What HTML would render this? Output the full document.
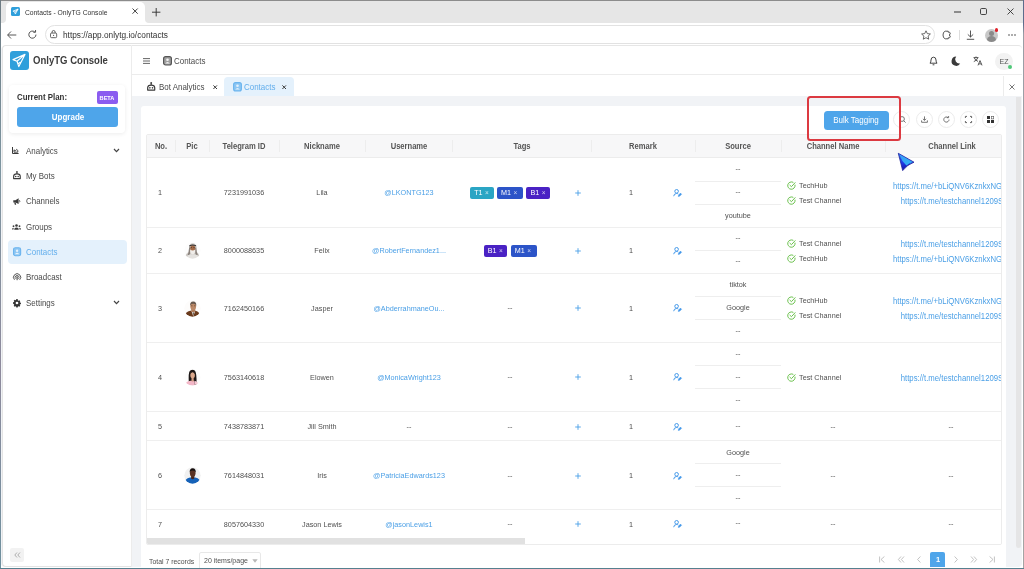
<!DOCTYPE html>
<html><head><meta charset="utf-8"><title>Contacts - OnlyTG Console</title>
<style>
*{box-sizing:border-box;margin:0;padding:0}
html,body{width:1024px;height:569px;overflow:hidden;background:#fff;font-family:"Liberation Sans",sans-serif;color:#555}
.a{position:absolute}
.t{position:absolute;white-space:nowrap;line-height:1;font-size:7.8px;color:#505050;transform:scaleX(.93);transform-origin:0 50%}
.c{transform:translateX(-50%) scaleX(.93);transform-origin:50% 50%}
.b{font-weight:bold}
.lk{color:#4a9fe6}
.ic{top:111.2px;width:17px;height:17px;border-radius:50%;border:1px solid #ececec;background:#fff}
.th{font-size:8.17px;color:#555}
.tg{height:11.6px;border-radius:2px;color:#fff;font-size:7.2px;line-height:11.6px;white-space:nowrap;padding-left:4px}
.tg span{display:inline-block}
.tg i{font-style:normal;font-size:6.5px;margin-left:2.5px;opacity:.75}
.m{font-size:8.55px;color:#4a4a4a}
svg{position:absolute;overflow:visible}
</style></head><body><div id="root" style="position:absolute;left:0;top:0;width:1024px;height:569px;will-change:transform">
<!-- browser chrome -->
<div class="a" style="left:0;top:0;width:1024px;height:22.6px;background:#e6e6e6"></div>
<div class="a" style="left:0;top:0;width:1024px;height:1px;background:#8c8c8c"></div>
<div class="a" style="left:6.4px;top:2.2px;width:138.8px;height:21px;background:#fff;border-radius:5px 5px 0 0"></div>
<div class="a" style="left:1px;top:19px;width:5.4px;height:4px;background:#fff"></div><div class="a" style="left:1px;top:14px;width:5.4px;height:8.6px;background:#e6e6e6;border-radius:0 0 4px 0"></div>
<div class="a" style="left:145.2px;top:19px;width:5.4px;height:4px;background:#fff"></div><div class="a" style="left:145.2px;top:14px;width:5.4px;height:8.6px;background:#e6e6e6;border-radius:0 0 0 4px"></div>
<div class="a" style="left:0;top:22.6px;width:1024px;height:23.4px;background:#fff"></div>
<div class="a" style="left:45px;top:25px;width:890px;height:18.5px;border:1px solid #e2e2e2;border-radius:9.5px;background:#fff"></div>
<div class="t" id="tabtitle" style="left:24.8px;top:9.2px;font-size:7.26px;color:#333">Contacts - OnlyTG Console</div>
<div class="t" id="url" style="left:63px;top:30.5px;font-size:8.92px;color:#333">https://app.onlytg.io/contacts</div>

<!-- page -->
<div class="a" id="page" style="left:1px;top:46px;width:1020.6px;height:521px;background:#f1f3f6;border-radius:4px"></div>
<!-- sidebar -->
<div class="a" style="left:2.4px;top:45.4px;width:129.6px;height:521.600px;background:#fff;border:1px solid #e4e4e4;border-right-color:#ececec;border-radius:4px 0 0 4px"></div>
<!-- header -->
<div class="a" style="left:132px;top:45.4px;width:889.600px;height:29.600px;background:#fff;border-top:1px solid #e6e6e6;border-bottom:1px solid #ececec;border-radius:0 4px 0 0"></div>
<!-- tabs row -->
<div class="a" style="left:132px;top:75px;width:890px;height:21px;background:#fff"></div>
<!-- card -->
<div class="a" style="left:141px;top:106px;width:865px;height:461px;background:#fff;border-radius:3px 3px 0 0"></div>


<!-- SIDEBAR CONTENT -->
<div class="a" style="left:10px;top:51px;width:19px;height:19px;background:#2f9fdb;border-radius:3px"></div>
<svg style="left:10px;top:51px" width="19" height="19" viewBox="0 0 19 19"><path d="M15 3.400L3 8.600L7 10.300ZM15 3.400L7 10.300L8.800 15.600ZM8 12.800L10 11.400" fill="none" stroke="#fff" stroke-width="1.150" stroke-linejoin="round" stroke-linecap="round"/></svg>
<div class="t b" id="brand" style="left:33px;top:56.3px;font-size:10.4px;color:#3d3d3d;transform:scaleX(.92);transform-origin:0 0">OnlyTG Console</div>
<div class="a" style="left:9px;top:85px;width:116px;height:48px;background:#fff;border-radius:4px;box-shadow:0 1px 4px rgba(0,0,0,.08)"></div>
<div class="t b" id="plan" style="left:17px;top:92.800px;font-size:8.500px;color:#333;transform:scaleX(.93);transform-origin:0 0">Current Plan:</div>
<div class="a" style="left:96.5px;top:91px;width:21.5px;height:12.5px;background:#8b5cf0;border-radius:2px"></div>
<div class="t b c" style="left:107.2px;top:94.5px;font-size:6.02px;color:#fff">BETA</div>
<div class="a" style="left:17px;top:107px;width:101px;height:19.5px;background:#4ea5ea;border-radius:3px"></div>
<div class="t b c" id="upg" style="left:67.5px;top:113px;font-size:8.6px;color:#fff">Upgrade</div>

<div class="a" style="left:8px;top:240px;width:119px;height:23.5px;background:#e4f1fc;border-radius:4px"></div>
<div class="t m" style="left:26px;top:146.8px">Analytics</div>
<div class="t m" style="left:26px;top:172.1px">My Bots</div>
<div class="t m" style="left:26px;top:197.4px">Channels</div>
<div class="t m" style="left:26px;top:222.8px">Groups</div>
<div class="t m" style="left:26px;top:248.1px;color:#62aeec">Contacts</div>
<div class="t m" style="left:26px;top:273.4px">Broadcast</div>
<div class="t m" style="left:26px;top:298.8px">Settings</div>
<svg style="left:113px;top:147.5px" width="7" height="5" viewBox="0 0 7 5"><path d="M1 1 L3.5 3.6 L6 1" fill="none" stroke="#444" stroke-width="1.2"/></svg>
<svg style="left:113px;top:299.5px" width="7" height="5" viewBox="0 0 7 5"><path d="M1 1 L3.5 3.6 L6 1" fill="none" stroke="#444" stroke-width="1.2"/></svg>
<div class="a" style="left:10px;top:548px;width:14px;height:13.5px;background:#f2f2f2;border-radius:2px"></div>
<svg style="left:13.5px;top:551.5px" width="7" height="6" viewBox="0 0 7 6"><path d="M3 .5 L.8 3 L3 5.5 M6 .5 L3.8 3 L6 5.5" fill="none" stroke="#9a9a9a" stroke-width=".8"/></svg>


<!-- HEADER CONTENT -->
<svg style="left:142.5px;top:57.5px" width="7" height="6" viewBox="0 0 7 6"><path d="M0 .6H7M0 3H7M0 5.4H7" stroke="#555" stroke-width=".9"/></svg>
<svg style="left:162.5px;top:56px" width="9" height="10" viewBox="0 0 9 10"><rect x=".6" y=".6" width="7.8" height="8.4" rx="2" fill="#a0a0a0" stroke="#555" stroke-width="1.2"/><circle cx="4.5" cy="3.8" r="1.3" fill="#f4f4f4"/><path d="M2.2 7.600Q4.500 4.600 6.800 7.600Z" fill="#f4f4f4"/></svg>
<div class="t m" id="hc" style="left:174px;top:57px">Contacts</div>
<!-- tabs -->
<div class="a" style="left:223.5px;top:77px;width:70.5px;height:19px;background:#e4f1fc;border-radius:4px 4px 0 0"></div>
<svg style="left:147.400px;top:81.900px" width="8.4" height="8.8" viewBox="0 0 7.6 8"><circle cx="3.800" cy=".9" r=".85" fill="#3a3a3a"/><path d="M3.800 1.400V2.800" stroke="#3a3a3a" stroke-width="1"/><path d="M.6 7.300V5.300Q.6 2.800 3.800 2.800Q7 2.800 7 5.300V7.300Z" fill="none" stroke="#3a3a3a" stroke-width="1.100" stroke-linejoin="round"/><circle cx="2.600" cy="5.300" r=".75" fill="#3a3a3a"/><circle cx="5" cy="5.300" r=".75" fill="#3a3a3a"/></svg>
<div class="t m" id="tb1" style="left:159px;top:82.6px">Bot Analytics</div>
<svg style="left:212.600px;top:84.500px" width="4.4" height="4.4" viewBox="0 0 4.4 4.4"><path d="M.4 .4L4 4M4 .4L.4 4" stroke="#3a3a3a" stroke-width="1"/></svg>
<svg style="left:232.5px;top:82px" width="9" height="10" viewBox="0 0 9 10"><rect x=".6" y=".6" width="7.8" height="8.4" rx="2" fill="#8cc6f3" stroke="#6ab4ee" stroke-width="1.1"/><circle cx="4.5" cy="3.8" r="1.3" fill="#e4f1fc"/><path d="M2.2 7.6 Q4.5 4.6 6.8 7.6Z" fill="#e4f1fc"/></svg>
<div class="t m" id="tb2" style="left:244px;top:82.6px;color:#62aeec">Contacts</div>
<svg style="left:282.400px;top:84.500px" width="4.4" height="4.4" viewBox="0 0 4.4 4.4"><path d="M.4 .4L4 4M4 .4L.4 4" stroke="#3a3a3a" stroke-width="1"/></svg>
<div class="a" style="left:1002.5px;top:76px;width:1px;height:20px;background:#ececec"></div>
<svg style="left:1008.5px;top:83.5px" width="6" height="6" viewBox="0 0 6 6"><path d="M.5 .5L5.5 5.5M5.5 .5L.5 5.5" stroke="#555" stroke-width=".8"/></svg>
<!-- header right icons -->
<svg style="left:929px;top:55.5px" width="9" height="10" viewBox="0 0 9 10"><path d="M1 7.2 Q2 6.2 2 4 Q2 1.2 4.5 1.2 Q7 1.2 7 4 Q7 6.2 8 7.2 Z" fill="none" stroke="#444" stroke-width="1" stroke-linejoin="round"/><path d="M3.6 8.8H5.4" stroke="#444" stroke-width="1"/></svg>
<svg style="left:951px;top:55.5px" width="10" height="10" viewBox="0 0 10 10"><path d="M5.2 .6 A4.6 4.6 0 1 0 9.2 7.4 A4.2 4.2 0 0 1 5.2 .6Z" fill="#3a3a3a"/></svg>
<svg style="left:972.5px;top:56px" width="10" height="10" viewBox="0 0 10 10"><path d="M.6 1.6H5.4M3 .5V1.6M1.2 1.8Q2.4 4.6 5 5.4M4.8 1.8Q3.8 4.6 .8 5.6" fill="none" stroke="#444" stroke-width=".9"/><path d="M5 9.4L7 4.6L9 9.4M5.7 7.9H8.3" fill="none" stroke="#444" stroke-width=".9"/></svg>
<div class="a" style="left:995px;top:52.5px;width:17.5px;height:17.5px;border-radius:50%;background:#f2f2f2"></div>
<div class="t c" style="left:1003.5px;top:57.7px;font-size:7.52px;color:#555">EZ</div>
<div class="a" style="left:1007.5px;top:64.5px;width:4.6px;height:4.6px;border-radius:50%;background:#4fc878"></div>


<!-- CHROME ICONS -->
<div class="a" style="left:11px;top:6.9px;width:9.2px;height:9.2px;background:#2f9fdb;border-radius:1.5px"></div>
<svg style="left:11px;top:6.9px" width="9.2" height="9.2" viewBox="0 0 19 19"><path d="M14.6 4.2 L4 8.6 L7.6 10 L9 14.6 Z M7.6 10 L14.6 4.2 L9 11.3" fill="none" stroke="#fff" stroke-width="1.6" stroke-linejoin="round"/></svg>
<svg style="left:132.4px;top:8.4px" width="6.2" height="6.2" viewBox="0 0 6 6"><path d="M.5 .5L5.5 5.5M5.5 .5L.5 5.5" stroke="#333" stroke-width=".9"/></svg>
<svg style="left:152.2px;top:7.5px" width="8.4" height="8.4" viewBox="0 0 8 8"><path d="M4 0V8M0 4H8" stroke="#333" stroke-width=".9"/></svg>
<svg style="left:7.300px;top:30.500px" width="9.5" height="8" viewBox="0 0 9.5 8"><path d="M9.300 4H.8M4 .5L.6 4L4 7.500" fill="none" stroke="#444" stroke-width=".9"/></svg>
<svg style="left:28.300px;top:30px" width="9.2" height="9.2" viewBox="0 0 9 9"><path d="M7.8 4.5A3.5 3.5 0 1 1 6.6 1.9" fill="none" stroke="#444" stroke-width=".9"/><path d="M5.2 2.2H7.4V0" fill="none" stroke="#444" stroke-width=".9"/></svg>
<svg style="left:49.700px;top:29.800px" width="7.2" height="8.2" viewBox="0 0 7 8"><rect x=".5" y="3" width="6" height="4.5" rx="1" fill="none" stroke="#444" stroke-width=".8"/><path d="M2 3V2A1.5 1.5 0 0 1 5 2V3" fill="none" stroke="#444" stroke-width=".8"/><circle cx="3.5" cy="5.2" r=".6" fill="#444"/></svg>
<svg style="left:953.5px;top:10.5px" width="7" height="2" viewBox="0 0 7 2"><path d="M0 1H7" stroke="#333" stroke-width="1"/></svg>
<svg style="left:980px;top:8px" width="7" height="7" viewBox="0 0 7 7"><rect x=".5" y=".5" width="6" height="6" rx="1.2" fill="none" stroke="#333" stroke-width=".9"/></svg>
<svg style="left:1006.8px;top:8.2px" width="7" height="7" viewBox="0 0 7 7"><path d="M.5 .5L6.5 6.5M6.5 .5L.5 6.5" stroke="#333" stroke-width=".9"/></svg>
<svg style="left:920.5px;top:29.5px" width="10" height="10" viewBox="0 0 10 10"><path d="M5 .8L6.3 3.6L9.4 4L7.1 6.1L7.7 9.2L5 7.7L2.3 9.2L2.9 6.1L.6 4L3.7 3.6Z" fill="none" stroke="#444" stroke-width=".8" stroke-linejoin="round"/></svg>
<svg style="left:942px;top:30px" width="10" height="10" viewBox="0 0 10 10"><path d="M3.2 1.2H6.2V2.2Q7.6 1.6 8.2 3 Q8.6 4.6 7 5 Q8.6 5.6 8.2 7 Q7.6 8.4 6.2 7.8V8.8H3.2Q1 8.2 1 5Q1 1.8 3.2 1.2Z" fill="none" stroke="#444" stroke-width=".9" stroke-linejoin="round"/></svg>
<div class="a" style="left:958.5px;top:29.5px;width:1px;height:10px;background:#ddd"></div>
<svg style="left:965.5px;top:29.5px" width="9" height="10" viewBox="0 0 9 10"><path d="M4.5 .5V7M1.8 4.4L4.5 7L7.2 4.4M.8 9.3H8.2" fill="none" stroke="#444" stroke-width=".9"/></svg>
<div class="a" style="left:984.5px;top:28.5px;width:13px;height:13px;border-radius:50%;background:#c8c8c8;overflow:hidden"><div class="a" style="left:4px;top:2.2px;width:5px;height:5px;border-radius:50%;background:#8a8a8a"></div><div class="a" style="left:2px;top:7.6px;width:9px;height:8px;border-radius:50%;background:#8a8a8a"></div></div>
<div class="a" style="left:994.5px;top:28px;width:3.6px;height:3.6px;border-radius:50%;background:#e0202a"></div>
<svg style="left:1007.5px;top:34px" width="8" height="2" viewBox="0 0 8 2"><circle cx="1" cy="1" r=".8" fill="#444"/><circle cx="4" cy="1" r=".8" fill="#444"/><circle cx="7" cy="1" r=".8" fill="#444"/></svg>

<!-- TABLE -->
<div class="a" id="tbl" style="left:145.7px;top:134px;width:856.0999999999999px;height:411px;overflow:hidden;border:1px solid #ececec;border-radius:2px">
<div class="a" style="left:0;top:0;width:900px;height:23px;background:#f7f7f8;border-bottom:1px solid #ececec"></div>
<div class="t b c th" style="left:14.3px;top:7.9px">No.</div>
<div class="t b c th" style="left:45.8px;top:7.9px">Pic</div>
<div class="a" style="left:28.8px;top:5px;width:1px;height:12px;background:#ededed"></div>
<div class="t b c th" style="left:97.8px;top:7.9px">Telegram ID</div>
<div class="a" style="left:62.8px;top:5px;width:1px;height:12px;background:#ededed"></div>
<div class="t b c th" style="left:175.8px;top:7.9px">Nickname</div>
<div class="a" style="left:132.8px;top:5px;width:1px;height:12px;background:#ededed"></div>
<div class="t b c th" style="left:262.3px;top:7.9px">Username</div>
<div class="a" style="left:218.8px;top:5px;width:1px;height:12px;background:#ededed"></div>
<div class="t b c th" style="left:375.05px;top:7.9px">Tags</div>
<div class="a" style="left:305.8px;top:5px;width:1px;height:12px;background:#ededed"></div>
<div class="t b c th" style="left:496.3px;top:7.9px">Remark</div>
<div class="a" style="left:444.3px;top:5px;width:1px;height:12px;background:#ededed"></div>
<div class="t b c th" style="left:591.3px;top:7.9px">Source</div>
<div class="a" style="left:548.3px;top:5px;width:1px;height:12px;background:#ededed"></div>
<div class="t b c th" style="left:686.55px;top:7.9px">Channel Name</div>
<div class="a" style="left:634.3px;top:5px;width:1px;height:12px;background:#ededed"></div>
<div class="t b c th" style="left:805.05px;top:7.9px">Channel Link</div>
<div class="a" style="left:738.8px;top:5px;width:1px;height:12px;background:#ededed"></div>
<div class="a" style="left:0;top:91.5px;width:900px;height:1px;background:#efefef"></div>
<div class="a" style="left:0;top:137.5px;width:900px;height:1px;background:#efefef"></div>
<div class="a" style="left:0;top:207.0px;width:900px;height:1px;background:#efefef"></div>
<div class="a" style="left:0;top:276.0px;width:900px;height:1px;background:#efefef"></div>
<div class="a" style="left:0;top:305.0px;width:900px;height:1px;background:#efefef"></div>
<div class="a" style="left:0;top:374.0px;width:900px;height:1px;background:#efefef"></div>
<div class="a" style="left:0;top:402.5px;width:900px;height:1px;background:#efefef"></div>
<div class="t c " style="left:13.8px;top:54.4px">1</div>
<div class="t c " style="left:97.3px;top:54.4px">7231991036</div>
<div class="t c " style="left:175.6px;top:54.4px">Lila</div>
<div class="t c lk" style="left:262.1px;top:54.4px">@LKONTG123</div>
<div class="a tg" style="left:323.5px;top:52.3px;width:23.5px;background:#2aa5c4"><span>T1</span><i>×</i></div>
<div class="a tg" style="left:350.4px;top:52.3px;width:26px;background:#2c54c8"><span>M1</span><i>×</i></div>
<div class="a tg" style="left:379.8px;top:52.3px;width:23.7px;background:#4a22c4"><span>B1</span><i>×</i></div>
<svg style="left:428.4px;top:54.8px" width="6" height="6" viewBox="0 0 6 6"><path d="M3 .2V5.8M.2 3H5.8" stroke="#4a9fe6" stroke-width=".9"/></svg>
<div class="t c " style="left:484.6px;top:54.4px">1</div>
<svg style="left:526.1px;top:53.9px" width="9" height="8" viewBox="0 0 9 8"><circle cx="3.6" cy="2.300" r="1.800" fill="none" stroke="#4499ea" stroke-width="1"/><path d="M.7 7.200Q.9 4.600 3.600 4.500Q4.600 4.500 5.200 4.900" fill="none" stroke="#4499ea" stroke-width="1"/><path d="M5.300 7.500L5.500 6.100L7.500 4.100L8.600 5.200L6.600 7.200Z" fill="#4499ea" stroke="#4499ea" stroke-width=".5" stroke-linejoin="round"/></svg>
<div class="t c " style="left:591.3px;top:30.2px">--</div>
<div class="t c " style="left:591.3px;top:53.2px">--</div>
<div class="a" style="left:548.3px;top:45.6px;width:86px;height:1px;background:#eeeeee"></div>
<div class="t c " style="left:591.3px;top:77.1px">youtube</div>
<div class="a" style="left:548.3px;top:68.6px;width:86px;height:1px;background:#eeeeee"></div>
<svg style="left:640.5px;top:45.9px" width="9" height="9" viewBox="0 0 9 9"><path d="M8.100 4.100A3.700 3.700 0 1 1 6 1.200" fill="none" stroke="#6cc24e" stroke-width="1" stroke-linecap="round"/><path d="M2.900 4.200L4.400 5.700L8.100 1.700" fill="none" stroke="#6cc24e" stroke-width="1" stroke-linecap="round" stroke-linejoin="round"/></svg>
<div class="t" style="left:652.3px;top:46.9px">TechHub</div>
<div class="t c lk" style="left:805.1px;top:46.7px;font-size:8.33px">https://t.me/+bLiQNV6KznkxNGYx</div>
<svg style="left:640.5px;top:60.9px" width="9" height="9" viewBox="0 0 9 9"><path d="M8.100 4.100A3.700 3.700 0 1 1 6 1.200" fill="none" stroke="#6cc24e" stroke-width="1" stroke-linecap="round"/><path d="M2.900 4.200L4.400 5.700L8.100 1.700" fill="none" stroke="#6cc24e" stroke-width="1" stroke-linecap="round" stroke-linejoin="round"/></svg>
<div class="t" style="left:652.3px;top:61.9px">Test Channel</div>
<div class="t c lk" style="left:805.1px;top:61.7px;font-size:8.33px">https://t.me/testchannel1209S</div>
<div class="t c " style="left:13.8px;top:112.2px">2</div>
<div class="t c " style="left:97.3px;top:112.2px">8000088635</div>
<div class="t c " style="left:175.6px;top:112.2px">Felix</div>
<div class="t c lk" style="left:262.1px;top:112.2px">@RobertFernandez1...</div>
<div class="a tg" style="left:336.95px;top:110.1px;width:23.7px;background:#4a22c4"><span>B1</span><i>×</i></div>
<div class="a tg" style="left:364.05px;top:110.1px;width:26px;background:#2c54c8"><span>M1</span><i>×</i></div>
<svg style="left:428.4px;top:112.6px" width="6" height="6" viewBox="0 0 6 6"><path d="M3 .2V5.8M.2 3H5.8" stroke="#4a9fe6" stroke-width=".9"/></svg>
<div class="t c " style="left:484.6px;top:112.2px">1</div>
<svg style="left:526.1px;top:111.7px" width="9" height="8" viewBox="0 0 9 8"><circle cx="3.6" cy="2.300" r="1.800" fill="none" stroke="#4499ea" stroke-width="1"/><path d="M.7 7.200Q.9 4.600 3.600 4.500Q4.600 4.500 5.200 4.900" fill="none" stroke="#4499ea" stroke-width="1"/><path d="M5.300 7.500L5.500 6.100L7.500 4.100L8.600 5.200L6.600 7.200Z" fill="#4499ea" stroke="#4499ea" stroke-width=".5" stroke-linejoin="round"/></svg>
<div class="t c " style="left:591.3px;top:99.2px">--</div>
<div class="t c " style="left:591.3px;top:122.2px">--</div>
<div class="a" style="left:548.3px;top:114.6px;width:86px;height:1px;background:#eeeeee"></div>
<svg style="left:640.5px;top:103.7px" width="9" height="9" viewBox="0 0 9 9"><path d="M8.100 4.100A3.700 3.700 0 1 1 6 1.200" fill="none" stroke="#6cc24e" stroke-width="1" stroke-linecap="round"/><path d="M2.900 4.200L4.400 5.700L8.100 1.700" fill="none" stroke="#6cc24e" stroke-width="1" stroke-linecap="round" stroke-linejoin="round"/></svg>
<div class="t" style="left:652.3px;top:104.7px">Test Channel</div>
<div class="t c lk" style="left:805.1px;top:104.5px;font-size:8.33px">https://t.me/testchannel1209S</div>
<svg style="left:640.5px;top:118.7px" width="9" height="9" viewBox="0 0 9 9"><path d="M8.100 4.100A3.700 3.700 0 1 1 6 1.200" fill="none" stroke="#6cc24e" stroke-width="1" stroke-linecap="round"/><path d="M2.900 4.200L4.400 5.700L8.100 1.700" fill="none" stroke="#6cc24e" stroke-width="1" stroke-linecap="round" stroke-linejoin="round"/></svg>
<div class="t" style="left:652.3px;top:119.7px">TechHub</div>
<div class="t c lk" style="left:805.1px;top:119.5px;font-size:8.33px">https://t.me/+bLiQNV6KznkxNGYx</div>
<div class="t c " style="left:13.8px;top:169.7px">3</div>
<div class="t c " style="left:97.3px;top:169.7px">7162450166</div>
<div class="t c " style="left:175.6px;top:169.7px">Jasper</div>
<div class="t c lk" style="left:262.1px;top:169.7px">@AbderrahmaneOu...</div>
<div class="t c " style="left:363.5px;top:169.1px">--</div>
<svg style="left:428.4px;top:170.1px" width="6" height="6" viewBox="0 0 6 6"><path d="M3 .2V5.8M.2 3H5.8" stroke="#4a9fe6" stroke-width=".9"/></svg>
<div class="t c " style="left:484.6px;top:169.7px">1</div>
<svg style="left:526.1px;top:169.2px" width="9" height="8" viewBox="0 0 9 8"><circle cx="3.6" cy="2.300" r="1.800" fill="none" stroke="#4499ea" stroke-width="1"/><path d="M.7 7.200Q.9 4.600 3.600 4.500Q4.600 4.500 5.200 4.900" fill="none" stroke="#4499ea" stroke-width="1"/><path d="M5.300 7.500L5.500 6.100L7.500 4.100L8.600 5.200L6.600 7.200Z" fill="#4499ea" stroke="#4499ea" stroke-width=".5" stroke-linejoin="round"/></svg>
<div class="t c " style="left:591.3px;top:146.18px">tiktok</div>
<div class="t c " style="left:591.3px;top:169.35px">Google</div>
<div class="a" style="left:548.3px;top:160.77px;width:86px;height:1px;background:#eeeeee"></div>
<div class="t c " style="left:591.3px;top:191.62px">--</div>
<div class="a" style="left:548.3px;top:183.93px;width:86px;height:1px;background:#eeeeee"></div>
<svg style="left:640.5px;top:161.2px" width="9" height="9" viewBox="0 0 9 9"><path d="M8.100 4.100A3.700 3.700 0 1 1 6 1.200" fill="none" stroke="#6cc24e" stroke-width="1" stroke-linecap="round"/><path d="M2.900 4.200L4.400 5.700L8.100 1.700" fill="none" stroke="#6cc24e" stroke-width="1" stroke-linecap="round" stroke-linejoin="round"/></svg>
<div class="t" style="left:652.3px;top:162.2px">TechHub</div>
<div class="t c lk" style="left:805.1px;top:162.0px;font-size:8.33px">https://t.me/+bLiQNV6KznkxNGYx</div>
<svg style="left:640.5px;top:176.2px" width="9" height="9" viewBox="0 0 9 9"><path d="M8.100 4.100A3.700 3.700 0 1 1 6 1.200" fill="none" stroke="#6cc24e" stroke-width="1" stroke-linecap="round"/><path d="M2.900 4.200L4.400 5.700L8.100 1.700" fill="none" stroke="#6cc24e" stroke-width="1" stroke-linecap="round" stroke-linejoin="round"/></svg>
<div class="t" style="left:652.3px;top:177.2px">Test Channel</div>
<div class="t c lk" style="left:805.1px;top:177.0px;font-size:8.33px">https://t.me/testchannel1209S</div>
<div class="t c " style="left:13.8px;top:238.9px">4</div>
<div class="t c " style="left:97.3px;top:238.9px">7563140618</div>
<div class="t c " style="left:175.6px;top:238.9px">Elowen</div>
<div class="t c lk" style="left:262.1px;top:238.9px">@MonicaWright123</div>
<div class="t c " style="left:363.5px;top:238.3px">--</div>
<svg style="left:428.4px;top:239.3px" width="6" height="6" viewBox="0 0 6 6"><path d="M3 .2V5.8M.2 3H5.8" stroke="#4a9fe6" stroke-width=".9"/></svg>
<div class="t c " style="left:484.6px;top:238.9px">1</div>
<svg style="left:526.1px;top:238.4px" width="9" height="8" viewBox="0 0 9 8"><circle cx="3.6" cy="2.300" r="1.800" fill="none" stroke="#4499ea" stroke-width="1"/><path d="M.7 7.200Q.9 4.600 3.600 4.500Q4.600 4.500 5.200 4.900" fill="none" stroke="#4499ea" stroke-width="1"/><path d="M5.300 7.500L5.500 6.100L7.500 4.100L8.600 5.200L6.600 7.200Z" fill="#4499ea" stroke="#4499ea" stroke-width=".5" stroke-linejoin="round"/></svg>
<div class="t c " style="left:591.3px;top:214.7px">--</div>
<div class="t c " style="left:591.3px;top:237.7px">--</div>
<div class="a" style="left:548.3px;top:230.1px;width:86px;height:1px;background:#eeeeee"></div>
<div class="t c " style="left:591.3px;top:260.7px">--</div>
<div class="a" style="left:548.3px;top:253.1px;width:86px;height:1px;background:#eeeeee"></div>
<svg style="left:640.5px;top:237.9px" width="9" height="9" viewBox="0 0 9 9"><path d="M8.100 4.100A3.700 3.700 0 1 1 6 1.200" fill="none" stroke="#6cc24e" stroke-width="1" stroke-linecap="round"/><path d="M2.900 4.200L4.400 5.700L8.100 1.700" fill="none" stroke="#6cc24e" stroke-width="1" stroke-linecap="round" stroke-linejoin="round"/></svg>
<div class="t" style="left:652.3px;top:238.9px">Test Channel</div>
<div class="t c lk" style="left:805.1px;top:238.7px;font-size:8.33px">https://t.me/testchannel1209S</div>
<div class="t c " style="left:13.8px;top:288.2px">5</div>
<div class="t c " style="left:97.3px;top:288.2px">7438783871</div>
<div class="t c " style="left:175.6px;top:288.2px">Jill Smith</div>
<div class="t c " style="left:262.1px;top:287.6px">--</div>
<div class="t c " style="left:363.5px;top:287.6px">--</div>
<svg style="left:428.4px;top:288.6px" width="6" height="6" viewBox="0 0 6 6"><path d="M3 .2V5.8M.2 3H5.8" stroke="#4a9fe6" stroke-width=".9"/></svg>
<div class="t c " style="left:484.6px;top:288.2px">1</div>
<svg style="left:526.1px;top:287.7px" width="9" height="8" viewBox="0 0 9 8"><circle cx="3.6" cy="2.300" r="1.800" fill="none" stroke="#4499ea" stroke-width="1"/><path d="M.7 7.200Q.9 4.600 3.600 4.500Q4.600 4.500 5.200 4.900" fill="none" stroke="#4499ea" stroke-width="1"/><path d="M5.300 7.500L5.500 6.100L7.500 4.100L8.600 5.200L6.600 7.200Z" fill="#4499ea" stroke="#4499ea" stroke-width=".5" stroke-linejoin="round"/></svg>
<div class="t c " style="left:591.3px;top:286.7px">--</div>
<div class="t c " style="left:686.6px;top:287.6px">--</div>
<div class="t c " style="left:804.8px;top:287.6px">--</div>
<div class="t c " style="left:13.8px;top:337.2px">6</div>
<div class="t c " style="left:97.3px;top:337.2px">7614848031</div>
<div class="t c " style="left:175.6px;top:337.2px">Iris</div>
<div class="t c lk" style="left:262.1px;top:337.2px">@PatriciaEdwards123</div>
<div class="t c " style="left:363.5px;top:336.6px">--</div>
<svg style="left:428.4px;top:337.6px" width="6" height="6" viewBox="0 0 6 6"><path d="M3 .2V5.8M.2 3H5.8" stroke="#4a9fe6" stroke-width=".9"/></svg>
<div class="t c " style="left:484.6px;top:337.2px">1</div>
<svg style="left:526.1px;top:336.7px" width="9" height="8" viewBox="0 0 9 8"><circle cx="3.6" cy="2.300" r="1.800" fill="none" stroke="#4499ea" stroke-width="1"/><path d="M.7 7.200Q.9 4.600 3.600 4.500Q4.600 4.500 5.200 4.900" fill="none" stroke="#4499ea" stroke-width="1"/><path d="M5.300 7.500L5.500 6.100L7.500 4.100L8.600 5.200L6.600 7.200Z" fill="#4499ea" stroke="#4499ea" stroke-width=".5" stroke-linejoin="round"/></svg>
<div class="t c " style="left:591.3px;top:313.6px">Google</div>
<div class="t c " style="left:591.3px;top:335.7px">--</div>
<div class="a" style="left:548.3px;top:328.1px;width:86px;height:1px;background:#eeeeee"></div>
<div class="t c " style="left:591.3px;top:358.7px">--</div>
<div class="a" style="left:548.3px;top:351.1px;width:86px;height:1px;background:#eeeeee"></div>
<div class="t c " style="left:686.6px;top:336.6px">--</div>
<div class="t c " style="left:804.8px;top:336.6px">--</div>
<div class="t c " style="left:13.8px;top:385.9px">7</div>
<div class="t c " style="left:97.3px;top:385.9px">8057604330</div>
<div class="t c " style="left:175.6px;top:385.9px">Jason Lewis</div>
<div class="t c lk" style="left:262.1px;top:385.9px">@jasonLewis1</div>
<div class="t c " style="left:363.5px;top:385.3px">--</div>
<svg style="left:428.4px;top:386.3px" width="6" height="6" viewBox="0 0 6 6"><path d="M3 .2V5.8M.2 3H5.8" stroke="#4a9fe6" stroke-width=".9"/></svg>
<div class="t c " style="left:484.6px;top:385.9px">1</div>
<svg style="left:526.1px;top:385.4px" width="9" height="8" viewBox="0 0 9 8"><circle cx="3.6" cy="2.300" r="1.800" fill="none" stroke="#4499ea" stroke-width="1"/><path d="M.7 7.200Q.9 4.600 3.600 4.500Q4.600 4.500 5.200 4.900" fill="none" stroke="#4499ea" stroke-width="1"/><path d="M5.300 7.500L5.500 6.100L7.500 4.100L8.600 5.200L6.600 7.200Z" fill="#4499ea" stroke="#4499ea" stroke-width=".5" stroke-linejoin="round"/></svg>
<div class="t c " style="left:591.3px;top:384.45px">--</div>
<div class="t c " style="left:686.6px;top:385.3px">--</div>
<div class="t c " style="left:804.8px;top:385.3px">--</div>
<div class="a" style="left:0;top:403.3px;width:900px;height:7px;background:#fff"></div>
<div class="a" style="left:0;top:403.4px;width:378.8px;height:6.2px;background:#e1e1e1;border-radius:0 0 0 2px"></div>
</div>
<div class="t" id="tot" style="left:149px;top:558px;font-size:7.42px">Total 7 records</div>
<div class="a" style="left:199px;top:551.5px;width:62.4px;height:18px;border:1px solid #e8e8e8;border-radius:2px;background:#fff"></div>
<div class="t" id="ipp" style="left:203.5px;top:557.4px;font-size:7.52px">20 items/page</div>
<svg style="left:251.5px;top:559px" width="6" height="4" viewBox="0 0 6 4"><path d="M.3 .3H5.7L3 3.8Z" fill="#b8b8b8"/></svg>
<div class="a" style="left:930px;top:552px;width:15px;height:15px;background:#4ea5ea;border-radius:2px 2px 0 0"></div>
<div class="t b c" style="left:937.5px;top:556.3px;font-size:8.06px;color:#fff">1</div>
<svg style="left:879px;top:556px" width="6" height="7" viewBox="0 0 6 7"><path d="M.6 .5V6.5M5.4 .5L2 3.5L5.4 6.5" fill="none" stroke="#b4b4b4" stroke-width=".8"/></svg>
<svg style="left:897.5px;top:556px" width="6" height="7" viewBox="0 0 6 7"><path d="M3 .5L.4 3.5L3 6.5M6 .5L3.4 3.5L6 6.5" fill="none" stroke="#b4b4b4" stroke-width=".8"/></svg>
<svg style="left:915.5px;top:556px" width="6" height="7" viewBox="0 0 6 7"><path d="M4.4 .5L1.6 3.5L4.4 6.5" fill="none" stroke="#b4b4b4" stroke-width=".8"/></svg>
<svg style="left:952.5px;top:556px" width="6" height="7" viewBox="0 0 6 7"><path d="M1.6 .5L4.4 3.5L1.6 6.5" fill="none" stroke="#b4b4b4" stroke-width=".8"/></svg>
<svg style="left:970.5px;top:556px" width="6" height="7" viewBox="0 0 6 7"><path d="M0 .5L2.6 3.5L0 6.5M3 .5L5.6 3.5L3 6.5" fill="none" stroke="#b4b4b4" stroke-width=".8"/></svg>
<svg style="left:989px;top:556px" width="6" height="7" viewBox="0 0 6 7"><path d="M5.4 .5V6.5M.6 .5L4 3.5L.6 6.5" fill="none" stroke="#b4b4b4" stroke-width=".8"/></svg>
<!-- /TABLE -->

<!-- AVATARS -->
<svg style="left:183.8px;top:242.2px" width="17" height="17" viewBox="0 0 17 17"><defs><clipPath id="cp"><circle cx="8.5" cy="8.5" r="8.3"/></clipPath><filter id="bl"><feGaussianBlur stdDeviation=".4"/></filter></defs>
<g clip-path="url(#cp)" filter="url(#bl)"><circle cx="8.5" cy="8.5" r="8.5" fill="#fdfdfd"/>
<path d="M5.200 5Q5.200 1.200 8.700 1.200Q12.200 1.200 12.200 5L12.800 10Q15.400 11.600 15.800 16.800L.8 16.800Q1.200 11.600 4.600 10Z" fill="#cfcbc7"/>
<path d="M5.200 5L4.600 10L3.400 13.400L6 12.400L6.300 6ZM12.200 5L12.800 10L14 13.400L11.400 12.400L11.100 6Z" fill="#8a827c"/>
<path d="M3.400 13.400Q8.700 11 14 13.400L14.600 17H2.800Z" fill="#e4e2df"/>
<ellipse cx="8.700" cy="6.400" rx="2.500" ry="3.200" fill="#a46c49"/>
<path d="M6.100 7.400Q6.200 12.200 8.700 12.200Q11.200 12.200 11.300 7.400Q8.700 9.600 6.100 7.400Z" fill="#f0ede9"/>
<path d="M5.200 3.500Q8.700 1.500 12.200 3.500L12.200 4.500Q8.700 2.600 5.200 4.500Z" fill="#262222"/>
<path d="M6.800 5.600H8M9.400 5.600H10.600" stroke="#4a2c1c" stroke-width=".7"/>
</g></svg>
<svg style="left:183.8px;top:299.8px" width="17" height="17" viewBox="0 0 17 17"><g clip-path="url(#cp)" filter="url(#bl)"><circle cx="8.5" cy="8.5" r="8.5" fill="#fdfcfb"/>
<path d="M.6 16Q1.200 12.200 6.200 10.800L11.600 10.800Q15.800 12 16.400 16V17.400H.6Z" fill="#6a3a1f"/>
<path d="M7.300 10.400L9.300 16.600L11.300 10.400Z" fill="#f1ece6"/>
<path d="M9 11.800L10 13L9.500 16.600L8.700 13Z" fill="#6b5a4c"/>
<path d="M7.200 8.600H11.200V11.400Q9.200 12.600 7.200 11.400Z" fill="#b07d5c"/>
<ellipse cx="9.200" cy="6.200" rx="2.900" ry="3.900" fill="#bb8968"/>
<path d="M6.200 6Q5.600 1.400 9.200 1.400Q12.800 1.400 12.200 6Q11.800 3.600 9.200 3.700Q6.600 3.600 6.200 6Z" fill="#66584e"/>
<path d="M7 5.800H8.500M10 5.800H11.500" stroke="#5a3a28" stroke-width=".6"/>
</g></svg>
<svg style="left:183.8px;top:369px" width="17" height="17" viewBox="0 0 17 17"><g clip-path="url(#cp)" filter="url(#bl)"><circle cx="8.5" cy="8.500" r="8.500" fill="#fdfdfd"/>
<path d="M4.800 14.400Q4.200 3 6 1.800Q8.600 -.2 11 1.800Q12.800 4 12.600 15.600L10.600 15.800L5.400 14.600Z" fill="#1e1917"/>
<path d="M1.200 15Q3.200 11.800 6.800 11.800L10 11.800Q10.800 13.400 10.600 16.400L2.600 16.400Z" fill="#f3b7c8"/>
<path d="M10.400 11.800Q12.800 12.200 14 14L12.600 15.600L10.600 15.800Z" fill="#f7c9d5"/>
<path d="M7.500 8.600H9.700V12.200Q8.600 12.800 7.500 12.200Z" fill="#d39e83"/>
<ellipse cx="8.600" cy="6" rx="2.300" ry="3.300" fill="#dba88c"/>
<path d="M6.100 5.600Q6.200 1.800 8.700 2Q11.200 1.800 11.200 5.800Q10.200 3.200 8.400 3.300Q7 3.400 6.100 5.600Z" fill="#1e1917"/>
</g></svg>
<svg style="left:183.6px;top:467px" width="17" height="17" viewBox="0 0 17 17"><g clip-path="url(#cp)" filter="url(#bl)"><circle cx="8.5" cy="8.500" r="8.500" fill="#f1f1f1"/>
<path d="M0 17Q.6 11.800 6 10.600L11.400 10.600Q16.600 11.800 17 17V17.600H0Z" fill="#1762b8"/>
<path d="M7.100 8.400H10.300V11.400Q8.700 13 7.100 11.400Z" fill="#47281b"/>
<ellipse cx="8.700" cy="6.200" rx="2.800" ry="3.700" fill="#5a3323"/>
<path d="M5.700 5.800Q5.300 1.200 8.700 1.200Q12.100 1.200 11.700 5.800Q11.300 3.400 8.700 3.500Q6.100 3.400 5.700 5.800Z" fill="#16100e"/>
</g></svg>
<!-- TOOLBAR -->
<div class="a" style="left:824px;top:110.5px;width:64.5px;height:19px;background:#4ea5ea;border-radius:3.5px"></div>
<div class="t c" id="bulk" style="left:856px;top:116px;font-size:8.6px;color:#fff">Bulk Tagging</div>
<div class="a ic" style="left:893.4px"></div><div class="a ic" style="left:915.9px"></div><div class="a ic" style="left:937.9px"></div><div class="a ic" style="left:959.9px"></div><div class="a ic" style="left:981.9px"></div>
<svg style="left:898.6px;top:116.2px" width="7" height="7" viewBox="0 0 7 7"><circle cx="3" cy="3" r="2.4" fill="none" stroke="#555" stroke-width=".8"/><path d="M4.8 4.8L6.6 6.6" stroke="#555" stroke-width=".8"/></svg>
<svg style="left:921px;top:116px" width="7" height="7" viewBox="0 0 7 7"><path d="M3.5 .4V4.2M1.9 2.8L3.5 4.4L5.1 2.8M.6 4.4V6.3H6.4V4.4" fill="none" stroke="#555" stroke-width=".8"/></svg>
<svg style="left:943.2px;top:116.2px" width="7" height="7" viewBox="0 0 7 7"><path d="M6 3.6A2.6 2.6 0 1 1 5 1.5" fill="none" stroke="#555" stroke-width=".8"/><path d="M3.8 1.7H5.6V0" fill="none" stroke="#555" stroke-width=".8"/></svg>
<svg style="left:964.9px;top:116.2px" width="7" height="7" viewBox="0 0 7 7"><path d="M.4 2V.4H2M5 .4H6.6V2M6.6 5V6.6H5M2 6.6H.4V5" fill="none" stroke="#555" stroke-width=".9"/></svg>
<svg style="left:986.9px;top:116.2px" width="7" height="7" viewBox="0 0 7 7"><rect x="0" y="0" width="3" height="3" fill="#333"/><rect x="4.3" y=".3" width="2.4" height="2.6" fill="#fff" stroke="#555" stroke-width=".6"/><rect x="0" y="4" width="3" height="3" fill="#333"/><rect x="4" y="4" width="3" height="3" fill="#333"/></svg>
<div class="a" style="left:806.5px;top:96.3px;width:94.7px;height:44.9px;border:2.7px solid #dc3a41;border-radius:3.5px"></div>
<svg style="left:897.8px;top:153px" width="17" height="19" viewBox="0 0 17 19"><defs><linearGradient id="cg" x1="0" y1="0" x2="1" y2=".6"><stop offset="0" stop-color="#3a9cf4"/><stop offset="1" stop-color="#30b0f4"/></linearGradient><linearGradient id="cg2" x1="0" y1="0" x2=".3" y2="1"><stop offset="0" stop-color="#2a6cf4"/><stop offset=".6" stop-color="#2038e4"/><stop offset="1" stop-color="#1418a8"/></linearGradient></defs><path d="M.3 .3L16 9.200Q9.400 11.400 4.700 17.600Z" fill="url(#cg2)" stroke="#1a1e9c" stroke-width=".8" stroke-linejoin="round"/><path d="M1.200 1.200L14.800 9.100Q11 10.200 8.400 12.600Q3.600 8 1.200 1.200Z" fill="url(#cg)"/></svg>


<!-- SIDE ICONS -->
<svg style="left:12.4px;top:146.8px" width="7" height="7" viewBox="0 0 7 7"><path d="M.5 0V6.500H6.600" fill="none" stroke="#3a3a3a" stroke-width="1"/><path d="M2 5.200V2.800L3.300 4L4.600 2.400L5.800 3.400V5.200Z" fill="none" stroke="#3a3a3a" stroke-width=".9" stroke-linejoin="round"/></svg>
<svg style="left:12.500px;top:171.400px" width="7.9" height="8.3" viewBox="0 0 7.6 8"><circle cx="3.800" cy=".9" r=".85" fill="#3a3a3a"/><path d="M3.800 1.400V2.800" stroke="#3a3a3a" stroke-width="1"/><path d="M.6 7.300V5.300Q.6 2.800 3.800 2.800Q7 2.800 7 5.300V7.300Z" fill="none" stroke="#3a3a3a" stroke-width="1.100" stroke-linejoin="round"/><circle cx="2.600" cy="5.300" r=".75" fill="#3a3a3a"/><circle cx="5" cy="5.300" r=".75" fill="#3a3a3a"/></svg>
<svg style="left:12.5px;top:197.5px" width="8" height="7" viewBox="0 0 8 7"><path d="M.3 2.2H2.4L5.6 .3V6.1L2.4 4.4H.3Z" fill="#3a3a3a"/><path d="M1.2 4.4H2.6L3.2 6.8H1.8Z" fill="#3a3a3a"/><path d="M6.4 2.2Q7.4 3.2 6.4 4.3" fill="none" stroke="#3a3a3a" stroke-width=".8"/></svg>
<svg style="left:12.3px;top:223.6px" width="9" height="6" viewBox="0 0 9 6"><circle cx="4.5" cy="1.5" r="1.3" fill="#3a3a3a"/><path d="M2.2 5.8Q2.2 3.4 4.5 3.4Q6.8 3.4 6.8 5.8Z" fill="#3a3a3a"/><circle cx="1.5" cy="2.2" r=".9" fill="#3a3a3a"/><circle cx="7.5" cy="2.2" r=".9" fill="#3a3a3a"/><path d="M0 5.4Q0 3.6 1.6 3.7Q1.7 4.6 1.5 5.4ZM9 5.4Q9 3.6 7.4 3.7Q7.3 4.6 7.5 5.4Z" fill="#3a3a3a"/></svg>
<svg style="left:12.6px;top:246.6px" width="8.2" height="9.4" viewBox="0 0 9 10"><rect x=".6" y=".6" width="7.8" height="8.8" rx="2" fill="#8cc6f3" stroke="#6ab4ee" stroke-width="1.2"/><circle cx="4.5" cy="3.9" r="1.3" fill="#e4f1fc"/><path d="M2.1 7.8 Q4.5 4.6 6.9 7.8Z" fill="#e4f1fc"/></svg>
<svg style="left:12.6px;top:273px" width="8.2" height="7.4" viewBox="0 0 8.2 7.4"><path d="M1.5 6.8A3.6 3.6 0 1 1 6.7 6.8" fill="none" stroke="#444" stroke-width=".9"/><path d="M2.9 5.8A1.9 1.9 0 1 1 5.3 5.8" fill="none" stroke="#444" stroke-width=".8"/><path d="M4.1 4.2V7.2" stroke="#444" stroke-width="1"/><circle cx="4.1" cy="4" r=".8" fill="#444"/></svg>
<svg style="left:12.7px;top:298.6px" width="8" height="8" viewBox="0 0 16 16"><path fill="#333" fill-rule="evenodd" d="M9.4 1l.4 1.9 1.2.5 1.6-1.1 2 2-1.100 1.600.5 1.200 1.900.400v2.800l-1.900.4-.5 1.200 1.100 1.600-2 2-1.600-1.100-1.200.5-.4 1.900H6.600l-.4-1.900-1.200-.5-1.600 1.100-2-2 1.100-1.600-.5-1.200L.1 9.400V6.600l1.900-.4.500-1.200L1.400 3.400l2-2L5 2.500l1.200-.5L6.600.1h2.800zM8 5.300a2.700 2.700 0 100 5.400 2.700 2.700 0 000-5.400z"/></svg>
<div class="a" style="left:1015.7px;top:97px;width:5.8px;height:451px;background:#e5e5e6;border-radius:0 0 3px 3px"></div>

<!-- window edges -->
<div class="a" style="left:0;top:0;width:1.1px;height:569px;background:linear-gradient(#6e7c84,#7d95a0 30%,#8e8a9c 65%,#6e909e)"></div>
<div class="a" style="left:1022.9px;top:0;width:1.1px;height:569px;background:linear-gradient(#5c6c8c 0,#5c6c8c 24px,#9a9ea6 34px,#a4a4a4 100%)"></div>
<div class="a" style="left:0;top:567.6px;width:1024px;height:2px;background:#56808f"></div>
</div></body></html>
